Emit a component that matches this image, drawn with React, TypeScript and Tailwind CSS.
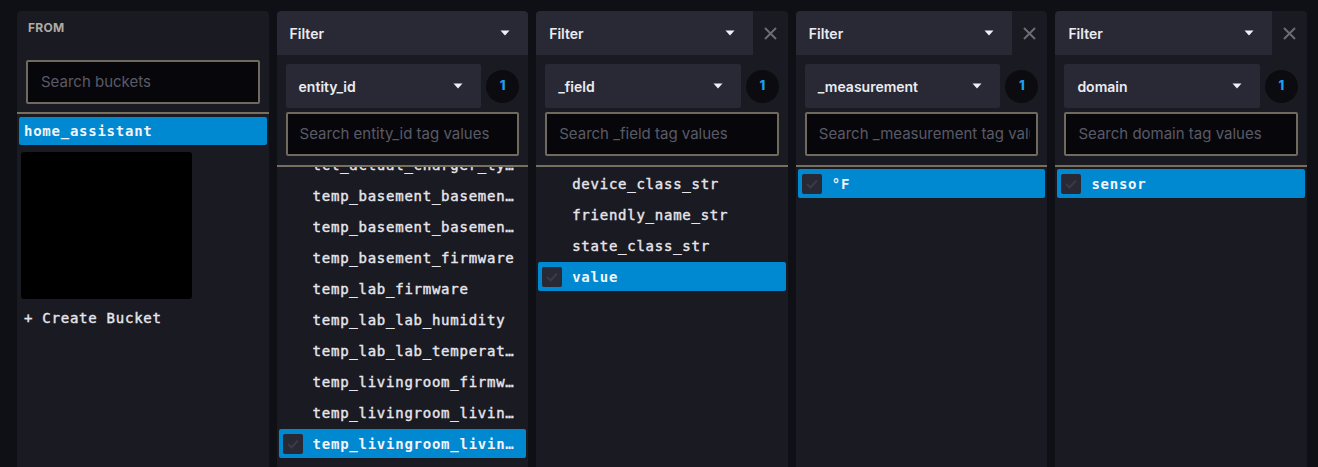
import React from "react";

const mono = "font-['DejaVu_Sans_Mono',monospace] text-[14px] tracking-[0.75px]";
const sans = "font-['Inter',sans-serif]";

function Caret() {
  return (
    <svg width="10" height="6" viewBox="0 0 10 6" className="shrink-0">
      <path d="M0.5 0.5 L9.5 0.5 L5 5.5 Z" fill="#f0f0f4" />
    </svg>
  );
}

function CloseIcon() {
  return (
    <svg width="13" height="13" viewBox="0 0 13 13">
      <path d="M1 1 L12 12 M12 1 L1 12" stroke="#6c6c78" strokeWidth="2" />
    </svg>
  );
}

function Checkbox({ visible }: { visible: boolean }) {
  if (!visible) return <div className="w-[20px] h-[20px] shrink-0" />;
  return (
    <div className="w-[20px] h-[20px] shrink-0 rounded-[2px] bg-[#292936] flex items-center justify-center">
      <svg width="12" height="10" viewBox="0 0 12 10">
        <path d="M1 5 L4.5 8.5 L11 1.5" stroke="#3a3a47" strokeWidth="2" fill="none" />
      </svg>
    </div>
  );
}

function ListRow({ label, selected }: { label: string; selected?: boolean }) {
  return (
    <div
      className={
        "h-[29px] mb-[2px] mx-[2px] pl-[4px] pr-[8px] flex items-center gap-[10px] rounded-[2px] " +
        (selected ? "bg-[#0088d1]" : "")
      }
    >
      <Checkbox visible={!!selected} />
      <span
        className={
          mono +
          " truncate min-w-0 pt-[2px] " +
          (selected
            ? "font-bold text-[#f4f4f8]"
            : "font-normal text-[#e6e6ec] [-webkit-text-stroke:0.4px_#e6e6ec]")
        }
      >
        {label}
      </span>
    </div>
  );
}

function FromColumn() {
  return (
    <div className="flex-1 min-w-0 bg-[#1a1a23] rounded-t-[4px] flex flex-col">
      <div className={sans + " pt-[9px] pl-[11px] text-[12px] leading-[16px] font-bold uppercase tracking-[0.3px] text-[#b0aba3]"}>
        From
      </div>
      <div
        className={
          sans +
          " mt-[24px] mx-[9px] h-[44px] border-2 border-[#70695e] bg-[#07070b] rounded-[2px] pl-[13px] flex items-center text-[15px] text-[#5a5a66]"
        }
      >
        Search buckets
      </div>
      <div className="mt-[8px] h-[2px] bg-[#77705f]" />
      <div className="pt-[3px] px-[2px]">
        <div className="h-[28px] bg-[#0088d1] rounded-[2px] pl-[5px] flex items-center">
          <span className={mono + " font-bold text-[#f4f4f8]"}>home_assistant</span>
        </div>
        <div className="mt-[7px] ml-[2px] w-[171px] h-[147px] bg-black rounded-[3px]" />
        <div
          className={
            mono +
            " mt-[9px] pl-[5px] leading-[20px] font-normal text-[#e6e6ec] [-webkit-text-stroke:0.4px_#e6e6ec]"
          }
        >
          + Create Bucket
        </div>
      </div>
    </div>
  );
}

type FilterProps = {
  tag: string;
  items: string[];
  selected: string;
  closable?: boolean;
  offset?: boolean;
};

function FilterColumn({ tag, items, selected, closable, offset }: FilterProps) {
  return (
    <div className="flex-1 min-w-0 bg-[#1a1a23] rounded-t-[4px] flex flex-col overflow-hidden">
      <div className="flex h-[44px] shrink-0">
        <div
          className={
            sans +
            " flex-1 bg-[#292936] rounded-tl-[4px] flex items-center justify-between pl-[13px] pr-[18px] " +
            (closable ? "" : "rounded-tr-[4px]")
          }
        >
          <span className="text-[14px] font-semibold text-[#ececf0]">Filter</span>
          <Caret />
        </div>
        {closable && (
          <div className="w-[35px] flex items-center justify-center">
            <CloseIcon />
          </div>
        )}
      </div>
      <div className="flex items-center gap-[5px] mt-[9px] px-[9px]">
        <div
          className={
            sans +
            " flex-1 min-w-0 h-[44px] bg-[#292936] rounded-[2px] flex items-center justify-between pl-[13px] pr-[18px]"
          }
        >
          <span className="text-[14px] font-semibold text-[#ececf0]">{tag}</span>
          <Caret />
        </div>
        <div className="w-[33px] h-[33px] shrink-0 rounded-full bg-[#0b0b10] flex items-center justify-center">
          <span className={sans + " text-[13px] font-extrabold text-[#1ea0f2]"}>1</span>
        </div>
      </div>
      <div className="mt-[4px] mx-[9px] h-[44px] border-2 border-[#70695e] bg-[#07070b] rounded-[2px] pl-[12px] pr-[6px] flex items-center">
        <div className={sans + " overflow-hidden whitespace-nowrap text-[15px] text-[#5a5a66]"}>
          Search {tag} tag values
        </div>
      </div>
      <div className="mt-[9px] h-[2px] bg-[#77705f] shrink-0" />
      <div className="flex-1 overflow-hidden pt-[2px]">
        <div className={offset ? "-mt-[19px]" : ""}>
          {items.map((it) => (
            <ListRow key={it} label={it} selected={it === selected} />
          ))}
        </div>
      </div>
    </div>
  );
}

export default function App() {
  const entities = [
    "tcl_actual_charger_type",
    "temp_basement_basement_humidity",
    "temp_basement_basement_temperature",
    "temp_basement_firmware",
    "temp_lab_firmware",
    "temp_lab_lab_humidity",
    "temp_lab_lab_temperature",
    "temp_livingroom_firmware",
    "temp_livingroom_livingroom_humidity",
    "temp_livingroom_livingroom_temperature",
  ];
  return (
    <div className="h-[467px] overflow-hidden bg-[#0f0f16] pl-[17px] pr-[11px] pt-[11px] flex gap-2">
      <FromColumn />
      <FilterColumn
        tag="entity_id"
        items={entities}
        selected="temp_livingroom_livingroom_temperature"
        offset
      />
      <FilterColumn
        tag="_field"
        items={["device_class_str", "friendly_name_str", "state_class_str", "value"]}
        selected="value"
        closable
      />
      <FilterColumn tag="_measurement" items={["°F"]} selected="°F" closable />
      <FilterColumn tag="domain" items={["sensor"]} selected="sensor" closable />
    </div>
  );
}
